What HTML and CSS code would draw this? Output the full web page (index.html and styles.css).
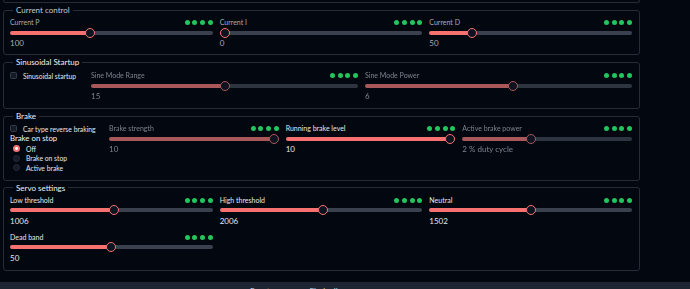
FILE: index.html
```html
<!DOCTYPE html>
<html lang="en">
<head>
    <meta charset="UTF-8">
    <meta name="viewport" content="width=device-width, initial-scale=1.0">
    <title>ESC Settings</title>
    <link rel="stylesheet" href="styles.css">
</head>
<body>
    <div class="page">
        <div class="prev-panel"></div>

        <fieldset class="panel panel-first dim">
            <legend>Current control</legend>
            <div class="grid cols-3">
                <div class="slider">
                    <div class="slider-head"><span>Current P</span><span class="dots"><i></i><i></i><i></i><i></i></span></div>
                    <input class="range" type="range" min="0" max="256" value="100" style="--p: 0.39">
                    <div class="slider-value">100</div>
                </div>
                <div class="slider">
                    <div class="slider-head"><span>Current I</span><span class="dots"><i></i><i></i><i></i><i></i></span></div>
                    <input class="range" type="range" min="0" max="256" value="0" style="--p: 0">
                    <div class="slider-value">0</div>
                </div>
                <div class="slider">
                    <div class="slider-head"><span>Current D</span><span class="dots"><i></i><i></i><i></i><i></i></span></div>
                    <input class="range" type="range" min="0" max="256" value="50" style="--p: 0.195">
                    <div class="slider-value">50</div>
                </div>
            </div>
        </fieldset>

        <fieldset class="panel panel-sine">
            <legend>Sinusoidal Startup</legend>
            <div class="grid cols-sine">
                <label class="check"><input type="checkbox"> Sinusoidal startup</label>
                <div class="slider off">
                    <div class="slider-head"><span>Sine Mode Range</span><span class="dots"><i></i><i></i><i></i><i></i></span></div>
                    <input class="range" type="range" min="0" max="30" value="15" style="--p: 0.5" disabled>
                    <div class="slider-value">15</div>
                </div>
                <div class="slider off">
                    <div class="slider-head"><span>Sine Mode Power</span><span class="dots"><i></i><i></i><i></i><i></i></span></div>
                    <input class="range" type="range" min="1" max="10" value="6" style="--p: 0.555" disabled>
                    <div class="slider-value">6</div>
                </div>
            </div>
        </fieldset>

        <fieldset class="panel">
            <legend>Brake</legend>
            <div class="grid cols-brake">
                <div class="brake-options">
                    <label class="check"><input type="checkbox"> Car type reverse braking</label>
                    <div class="group-title">Brake on stop</div>
                    <label class="radio"><input type="radio" name="stop" checked> Off</label>
                    <label class="radio"><input type="radio" name="stop"> Brake on stop</label>
                    <label class="radio"><input type="radio" name="stop"> Active brake</label>
                </div>
                <div class="slider off">
                    <div class="slider-head"><span>Brake strength</span><span class="dots"><i></i><i></i><i></i><i></i></span></div>
                    <input class="range" type="range" min="0" max="10" value="10" style="--p: 1" disabled>
                    <div class="slider-value">10</div>
                </div>
                <div class="slider">
                    <div class="slider-head"><span>Running brake level</span><span class="dots"><i></i><i></i><i></i><i></i></span></div>
                    <input class="range" type="range" min="0" max="10" value="10" style="--p: 1">
                    <div class="slider-value">10</div>
                </div>
                <div class="slider off">
                    <div class="slider-head"><span>Active brake power</span><span class="dots"><i></i><i></i><i></i><i></i></span></div>
                    <input class="range" type="range" min="0" max="5" value="2" style="--p: 0.4" disabled>
                    <div class="slider-value">2 % duty cycle</div>
                </div>
            </div>
        </fieldset>

        <fieldset class="panel">
            <legend>Servo settings</legend>
            <div class="grid cols-3 rows">
                <div class="slider">
                    <div class="slider-head"><span>Low threshold</span><span class="dots"><i></i><i></i><i></i><i></i></span></div>
                    <input class="range" type="range" min="750" max="1250" value="1006" style="--p: 0.514">
                    <div class="slider-value">1006</div>
                </div>
                <div class="slider">
                    <div class="slider-head"><span>High threshold</span><span class="dots"><i></i><i></i><i></i><i></i></span></div>
                    <input class="range" type="range" min="1750" max="2250" value="2006" style="--p: 0.514">
                    <div class="slider-value">2006</div>
                </div>
                <div class="slider">
                    <div class="slider-head"><span>Neutral</span><span class="dots"><i></i><i></i><i></i><i></i></span></div>
                    <input class="range" type="range" min="1374" max="1630" value="1502" style="--p: 0.5">
                    <div class="slider-value">1502</div>
                </div>
                <div class="slider">
                    <div class="slider-head"><span>Dead band</span><span class="dots"><i></i><i></i><i></i><i></i></span></div>
                    <input class="range" type="range" min="0" max="100" value="50" style="--p: 0.5">
                    <div class="slider-value">50</div>
                </div>
            </div>
        </fieldset>
    </div>

    <div class="footer">
        <span>Reset</span>
        <span>Flash all</span>
    </div>
</body>
</html>
```

FILE: styles.css
```css
html, body {
    height: 289px;
    overflow: hidden;
}
body {
    margin: 0;
    background: #03070f;
    color: #e6e8ec;
    font-family: Lato, "Noto Sans", sans-serif;
}
.page {
    width: 637px;
    padding-left: 3px;
}
.prev-panel {
    height: 2px;
    border: 1px solid #262c37;
    border-top: 0;
    border-radius: 0 0 3px 3px;
}
.panel {
    margin: 2px 0 0;
    padding: 3px 7px 7px 6px;
    border: 1px solid #262c37;
    border-radius: 3px;
    min-width: 0;
}
.panel legend {
    font-size: 8px;
    line-height: 10px;
    padding: 0 3px;
    margin-left: 3px;
    color: #f1f2f4;
}
.panel-first {
    padding-bottom: 6px;
}
.panel-sine {
    padding-top: 4px;
}
.grid {
    display: grid;
    gap: 7px;
}
.cols-3 {
    grid-template-columns: repeat(3, 1fr);
}
.cols-sine {
    grid-template-columns: 74px 1fr 1fr;
}
.cols-brake {
    grid-template-columns: 92px 1fr 1fr 1fr;
}
.slider-head {
    display: flex;
    justify-content: space-between;
    align-items: center;
    height: 9px;
    font-size: 7px;
    line-height: 9px;
}
.dots {
    display: flex;
    gap: 2.7px;
}
.dots i {
    width: 5px;
    height: 5px;
    border-radius: 50%;
    background: #22c55e;
}
.slider-value {
    font-size: 8px;
    line-height: 10px;
}
.range {
    --fill: #f87171;
    --track: #3a414e;
    -webkit-appearance: none;
    appearance: none;
    display: block;
    width: 100%;
    height: 11px;
    margin: 0;
    background: transparent;
}
.range::-webkit-slider-runnable-track {
    height: 4px;
    border-radius: 2px;
    background: linear-gradient(to right, var(--fill) calc(5px + (100% - 10px) * var(--p)), var(--track) 0);
}
.range::-webkit-slider-thumb {
    -webkit-appearance: none;
    box-sizing: border-box;
    width: 10px;
    height: 10px;
    margin-top: -3px;
    border-radius: 50%;
    border: 1.5px solid var(--fill);
    background: #0d1421;
}
.dim legend {
    color: #c4c8cf;
}
.dim .slider-head span:first-child,
.dim .slider-value {
    color: #a9adb5;
}
.off .slider-head span:first-child,
.off .slider-value {
    color: #7d838e;
    filter: blur(0.3px);
}
.off .range {
    --fill: #a85858;
    --track: #2e343f;
}
.check, .radio {
    display: flex;
    align-items: center;
    gap: 6px;
    font-size: 6.8px;
}
.check {
    height: 9px;
}
.radio {
    height: 9.5px;
    padding-left: 3px;
}
.check input, .radio input {
    -webkit-appearance: none;
    appearance: none;
    box-sizing: border-box;
    width: 7px;
    height: 7px;
    margin: 0;
    background: #151b27;
    border: 1px solid #343b49;
}
.check input {
    border-radius: 1.5px;
}
.radio input {
    border-radius: 50%;
    border-color: #222938;
}
.radio input:checked {
    border: 0;
    background: radial-gradient(circle, #fff 0 1.2px, #f87171 1.6px);
}
.group-title {
    font-size: 7.8px;
    line-height: 11px;
    color: #f3f4f6;
}
.footer {
    margin-top: 11px;
    height: 40px;
    background: #1e2532;
    display: flex;
    gap: 40px;
    padding: 4px 0 0 250px;
    font-size: 8px;
    color: #d0d4da;
}
```
